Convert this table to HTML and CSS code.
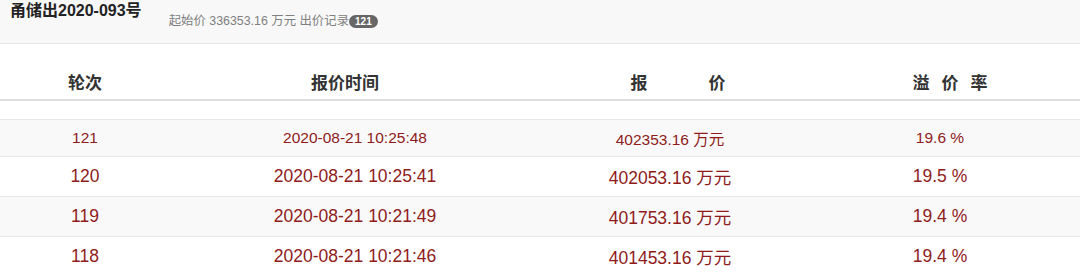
FILE: index.html
```html
<!DOCTYPE html>
<html lang="zh">
<head>
<meta charset="utf-8">
<title>甬储出2020-093号</title>
<link rel="stylesheet" href="styles.css">
</head>
<body>
<div class="top">
  <h1 class="title">甬储出2020-093号</h1>
  <div class="sub">起始价 336353.16 万元 出价记录<span class="badge">121</span></div>
</div>
<div class="table">
  <div class="row head">
    <div class="c c1">轮次</div>
    <div class="c c2">报价时间</div>
    <div class="c c3"><span>报</span><span>价</span></div>
    <div class="c c4"><span>溢</span><span>价</span><span>率</span></div>
  </div>
  <div class="row spacer"></div>
  <div class="row data first odd">
    <div class="c">121</div>
    <div class="c">2020-08-21 10:25:48</div>
    <div class="c">402353.16 万元</div>
    <div class="c">19.6 %</div>
  </div>
  <div class="row data">
    <div class="c">120</div>
    <div class="c">2020-08-21 10:25:41</div>
    <div class="c">402053.16 万元</div>
    <div class="c">19.5 %</div>
  </div>
  <div class="row data odd">
    <div class="c">119</div>
    <div class="c">2020-08-21 10:21:49</div>
    <div class="c">401753.16 万元</div>
    <div class="c">19.4 %</div>
  </div>
  <div class="row data last">
    <div class="c">118</div>
    <div class="c">2020-08-21 10:21:46</div>
    <div class="c">401453.16 万元</div>
    <div class="c">19.4 %</div>
  </div>
</div>
</body>
</html>
```
FILE: styles.css
```css
html, body {
  margin: 0;
  padding: 0;
  background: #ffffff;
  font-family: "Liberation Sans", "Noto Sans CJK SC", sans-serif;
  overflow: hidden;
}

.top {
  height: 43px;
  background: #f8f8f8;
  border-bottom: 1px solid #e6e6e6;
  display: flex;
  align-items: flex-start;
}

.title {
  margin: 0 0 0 10px;
  padding-top: 1px;
  font-size: 16px;
  line-height: 20px;
  font-weight: bold;
  color: #222;
}

.sub {
  margin-left: 27px;
  padding-top: 13px;
  font-size: 12.4px;
  line-height: 16px;
  color: #808080;
  display: flex;
  align-items: center;
}

.badge {
  display: inline-block;
  background: #666;
  color: #fff;
  font-size: 10px;
  font-weight: bold;
  line-height: 13px;
  height: 13px;
  padding: 0 6px;
  border-radius: 7px;
}

.table {
  display: flex;
  flex-direction: column;
}

.row {
  display: grid;
  grid-template-columns: 170px 370px 260px 280px;
  border-bottom: 1px solid #e6e6e6;
}

.c {
  display: flex;
  justify-content: center;
  align-items: center;
}

.head {
  height: 57px;
  box-sizing: border-box;
  align-items: end;
  border-bottom: 2px solid #dedede;
  font-size: 17px;
  font-weight: bold;
  color: #333;
}

.head .c {
  height: 36px;
}

.head .c2 {
  padding-right: 20px;
}

.head .c3 {
  padding-left: 16px;
  gap: 61px;
}

.head .c4 {
  padding-left: 20px;
  gap: 12px;
}

.spacer {
  height: 18px;
}

.data {
  height: 39px;
  font-size: 17.5px;
  color: #8f1b1b;
}

.data.first {
  height: 36px;
  font-size: 15.5px;
}

.data.odd {
  background: #f9f9f9;
}

.data.last {
  border-bottom: none;
}
```
